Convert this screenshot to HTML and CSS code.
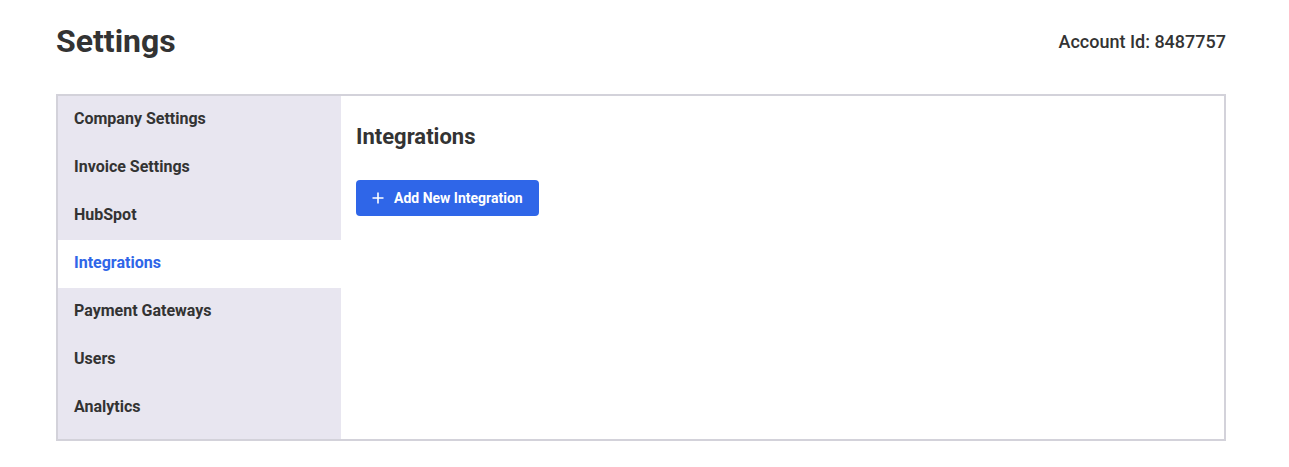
FILE: index.html
```html
<!DOCTYPE html>
<html lang="en">
<head>
    <meta charset="UTF-8">
    <meta name="viewport" content="width=device-width, initial-scale=1.0">
    <title>Settings</title>
    <link rel="stylesheet" href="styles.css">
</head>
<body>
    <div class="page">
        <header class="page-header">
            <h1>Settings</h1>
            <div class="account-id">Account Id: 8487757</div>
        </header>

        <div class="settings-box">
            <nav class="settings-nav">
                <a href="#" class="nav-item">Company Settings</a>
                <a href="#" class="nav-item">Invoice Settings</a>
                <a href="#" class="nav-item">HubSpot</a>
                <a href="#" class="nav-item active">Integrations</a>
                <a href="#" class="nav-item">Payment Gateways</a>
                <a href="#" class="nav-item">Users</a>
                <a href="#" class="nav-item">Analytics</a>
            </nav>

            <section class="settings-content">
                <h2>Integrations</h2>
                <button type="button" class="btn-primary">
                    <svg class="btn-icon" width="12" height="12" viewBox="0 0 12 12">
                        <path d="M6 0.5v11M0.5 6h11" stroke="#fff" stroke-width="1.6" fill="none"/>
                    </svg>
                    Add New Integration
                </button>
            </section>
        </div>
    </div>
</body>
</html>
```

FILE: styles.css
```css
body {
    font-family: Roboto, "Noto Sans", Arial, sans-serif;
    background-color: #fff;
    color: #333;
    margin: 0;
}

.page {
    padding: 0 63px 0 56px;
}

.page-header {
    display: flex;
    justify-content: space-between;
    align-items: center;
    height: 94px;
    padding-bottom: 12px;
    box-sizing: border-box;
}

.page-header h1 {
    margin: 0;
    font-size: 32px;
    font-weight: 700;
    color: #333;
}

.account-id {
    font-size: 18px;
    font-weight: 500;
    color: #333;
}

.settings-box {
    display: flex;
    border: 2px solid #d3d2da;
    height: 347px;
    box-sizing: border-box;
}

.settings-nav {
    width: 283px;
    background-color: #e8e6f0;
    display: flex;
    flex-direction: column;
}

.nav-item {
    display: flex;
    align-items: center;
    height: 48px;
    padding: 0 16px 4px;
    box-sizing: border-box;
    font-size: 16px;
    font-weight: 700;
    color: #333;
    text-decoration: none;
}

.nav-item.active {
    background-color: #fff;
    color: #2f66e8;
}

.settings-content {
    flex: 1;
    padding: 28px 15px;
}

.settings-content h2 {
    margin: 0 0 31px;
    font-size: 22px;
    font-weight: 700;
    color: #333;
}

.btn-primary {
    display: inline-flex;
    align-items: center;
    gap: 10px;
    height: 36px;
    padding: 0 16px;
    background-color: #2f66e8;
    color: #fff;
    border: none;
    border-radius: 4px;
    font-family: inherit;
    font-size: 14px;
    font-weight: 700;
    cursor: pointer;
}

.btn-primary:hover {
    background-color: #2455c9;
}
```
